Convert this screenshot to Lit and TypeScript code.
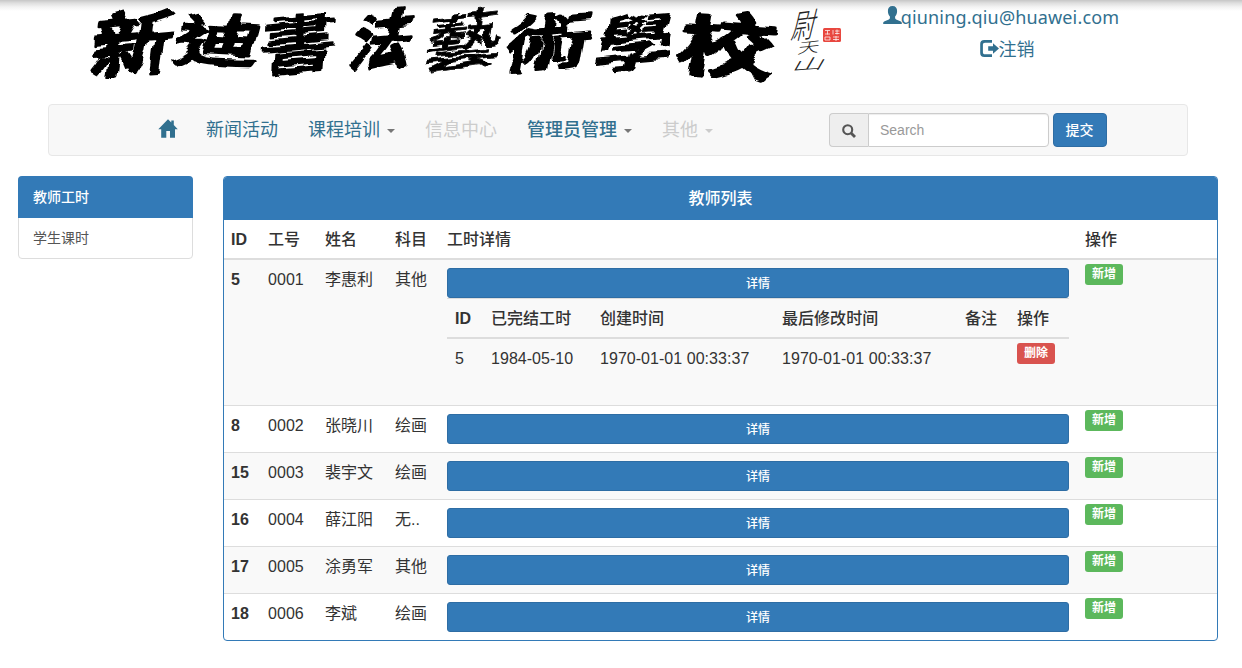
import { LitElement, html, css, svg, nothing } from "lit";
import { customElement } from "lit/decorators.js";

interface Detail { id: string; done: string; created: string; modified: string; note: string; }
interface Teacher { id: string; no: string; name: string; subject: string; details?: Detail[]; }

const TEACHERS: Teacher[] = [
  { id: "5", no: "0001", name: "李惠利", subject: "其他",
    details: [{ id: "5", done: "1984-05-10", created: "1970-01-01 00:33:37", modified: "1970-01-01 00:33:37", note: "" }] },
  { id: "8", no: "0002", name: "张晓川", subject: "绘画" },
  { id: "15", no: "0003", name: "裴宇文", subject: "绘画" },
  { id: "16", no: "0004", name: "薛江阳", subject: "无.." },
  { id: "17", no: "0005", name: "涂勇军", subject: "其他" },
  { id: "18", no: "0006", name: "李斌", subject: "绘画" },
];

// char, centre x, centre y, x scale, y scale, skew, rotation, stroke weight
const BRUSH: [string, number, number, number, number, number, number, number][] = [
  ["新", 133, 44, 0.82, 0.68, -12, -5, 4.5],
  ["迪", 219, 41, 0.84, 0.54, -12, 3, 5],
  ["書", 299, 43, 0.76, 0.68, -8, -5, 2.5],
  ["法", 383, 40, 0.62, 0.6, -18, -5, 6],
  ["藝", 463, 41, 0.76, 0.63, -14, -6, 1.2],
  ["術", 548, 43, 0.86, 0.64, -14, -4, 4],
  ["學", 634, 44, 0.78, 0.64, -16, -5, 2.2],
  ["校", 727, 46, 0.98, 0.68, -6, 4, 5],
];

@customElement("school-logo")
export class SchoolLogo extends LitElement {
  static styles = css`
    :host { display: block; }
    svg { display: block; overflow: visible; }
    text { font-family: "Noto Sans CJK TC", "Noto Sans CJK SC", sans-serif; text-anchor: middle; }
    .brush { font-size: 100px; font-weight: 500; fill: #060606; stroke: #060606; stroke-linejoin: round; }
    .sign { font-size: 24px; font-weight: 300; fill: #222; }
    .seal { fill: #e8473f; }
    .seal-lines { stroke: #fff; stroke-width: .9; fill: none; opacity: .8; }
    .scrap { stroke: #999; stroke-width: 1; stroke-dasharray: 4 2 2 3 7 2 5 3; }
  `;
  render() {
    return html`<svg width="860" height="104" viewBox="0 0 860 104" role="img" aria-label="新迪書法藝術學校">
      <defs>
        <filter id="rough" filterUnits="userSpaceOnUse" x="80" y="0" width="710" height="90">
          <feTurbulence type="fractalNoise" baseFrequency="0.035 0.05" numOctaves="2" seed="8" result="n"></feTurbulence>
          <feDisplacementMap in="SourceGraphic" in2="n" scale="13" xChannelSelector="R" yChannelSelector="G"></feDisplacementMap>
        </filter>
      </defs>
      <g filter="url(#rough)">
        ${BRUSH.map(([c, x, y, sx, sy, k, r, w]) => svg`<text class="brush" stroke-width=${w}
          transform="translate(${x} ${y}) rotate(${r}) skewX(${k}) scale(${sx} ${sy})" x="0" y="37">${c}</text>`)}
      </g>
      <g>
        <text class="sign" transform="translate(805 25) rotate(-8) skewX(-22) scale(1 1.35)" x="0" y="9">尉</text>
        <text class="sign" transform="translate(809 47) rotate(-6) skewX(-18) scale(.9 .6)" x="0" y="9">天</text>
        <text class="sign" transform="translate(810 64) rotate(-4) skewX(-34) scale(1.35 .6)" x="0" y="9">山</text>
      </g>
      <rect class="seal" x="823" y="28" width="18" height="14" rx="1.5"></rect>
      <path class="seal-lines" d="M825 30.500h5M827.500 30.500v4M825 34h5M833 30v4.500M835 31h4.500M835 33.500h4.500M837 29.500v5M825 37h5v3h-5zM833 37h6M833 39.500h6M836 36v5"></path>
    </svg>`;
  }
}

const userIcon = html`<svg width="19" height="18" viewBox="0 0 19 18" fill="currentColor"><path d="M9.5 0C12.600 0 14.200 2 14.100 5c0 2.500-.8 4.300-2 5.500v1.600c0 .7.400 1 1 1.300l4.300 1.900c1 .5 1.400 1 1.400 1.900v.8H.2v-.8c0-.9.400-1.400 1.400-1.900l4.300-1.900c.6-.3 1-.6 1-1.300v-1.600c-1.200-1.200-2-3-2-5.500C4.800 2 6.400 0 9.500 0z"/></svg>`;
const logoutIcon = html`<svg width="19" height="17" viewBox="0 0 19 17" fill="currentColor"><path d="M12 0v2.700H5C3.600 2.700 2.900 3.400 2.900 4.800v7.400c0 1.400.7 2.100 2.100 2.100h7V17H4.300C1.500 17 .2 15.500.2 12.900V4.100C.2 1.500 1.500 0 4.300 0z"/><path d="M13 3.200 19 8.500l-6 5.300V10.700H8.200V6.300H13z"/></svg>`;
const homeIcon = html`<svg width="20" height="19" viewBox="0 0 20 19" fill="currentColor"><path d="M10 .2 13.300 3.500V1.600h2.500V6L19.800 10.200H17V18.700H12V12H8.300v6.700H3.200V10.200H.3z"/></svg>`;
const searchIcon = html`<svg width="14" height="14" viewBox="0 0 14 14" fill="none" stroke="currentColor"><circle cx="5.700" cy="5.700" r="4.500" stroke-width="2.100"/><path d="M9 9l4 4" stroke-width="2.800"/></svg>`;

@customElement("app-root")
export class AppRoot extends LitElement {
  static styles = css`
    :host { display: block; width: 1242px; height: 668px; overflow: hidden; background: #fff; color: #333;
      font-family: "Liberation Sans", "Noto Sans CJK SC", sans-serif; font-size: 16px; line-height: 23px; }
    * { box-sizing: border-box; }
    svg { display: block; flex: none; }
    .header { height: 104px; display: flex; background: linear-gradient(#c6c6c6 0, #dedede 3px, #f3f3f3 7px, #fff 11px); }
    .user { width: 282px; display: flex; flex-direction: column; align-items: center; color: #31708f;
      font-family: "Noto Sans", "Noto Sans CJK SC", sans-serif; font-size: 18px; padding-top: 4px; }
    .user-line { display: flex; height: 26px; line-height: 26px; }
    .email { letter-spacing: .15px; white-space: nowrap; margin-left: -1px; }
    .user-line + .user-line { margin-top: 6px; padding-left: 12px; }
    .user-line svg { margin-top: 2px; }
    .user-line + .user-line svg { margin-top: 4px; }
    .nav { margin: 0 54px 0 48px; height: 52px; border: 1px solid #e7e7e7; border-radius: 4px; background: #f8f8f8;
      display: flex; align-items: center; font-size: 18px; color: #31708f; padding-left: 109px; }
    .menu { display: flex; align-items: center; gap: 30px; width: 671px; line-height: 26px; }
    .menu svg { margin: -3px -2px 0 0; }
    .item { display: flex; align-items: center; white-space: nowrap; }
    .item.mid { font-weight: 500; }
    .item.off { color: #ccc; }
    .caret { border: 4px solid transparent; border-top-color: #777; border-bottom: 0; margin: 2px 0 0 7px; }
    .off .caret { border-top-color: #ccc; }
    .search { display: flex; height: 34px; font-size: 14px; }
    .addon { width: 39px; border: 1px solid #ccc; border-right: 0; border-radius: 4px 0 0 4px; background: #eee; color: #555;
      display: flex; align-items: center; justify-content: center; padding: 2px 1px 0 0; }
    .field { width: 181px; border: 1px solid #ccc; border-radius: 0 4px 4px 0; background: #fff; font: inherit; padding: 0 11px;
      box-shadow: inset 0 1px 1px rgba(0,0,0,.075); outline: none; }
    .field::placeholder { color: #999; }
    .submit { margin-left: 4px; width: 54px; border: 1px solid #2e6da4; border-radius: 4px; background: #337ab7; color: #fff;
      font: 500 14px "Noto Sans CJK SC", sans-serif; padding: 0 1px 2px 0; }
    .main { display: flex; align-items: flex-start; padding: 20px 24px 0 18px; gap: 30px; }
    .side { width: 175px; font-size: 14px; flex: none; border: 1px solid #ddd; border-radius: 4px; color: #555; }
    .side-item { height: 40px; line-height: 40px; padding-left: 14px; }
    .side-item.active { background: #337ab7; color: #fff; font-weight: 500; border-radius: 4px 4px 0 0; margin: -1px -1px 0; padding-left: 15px; height: 42px; line-height: 42px; }
    .panel { width: 995px; border: 1px solid #337ab7; border-radius: 4px; overflow: hidden; }
    .title { background: #337ab7; color: #fff; height: 43px; line-height: 43px; text-align: center; font-weight: 500; }
    .row { display: grid; grid-template-columns: 36px 57px 70px 52px 638px 1fr; border-top: 1px solid #ddd; }
    .row:nth-child(even) { background: #f9f9f9; }
    .row.head { background: #fff; border-top: 0; border-bottom: 2px solid #ddd; height: 40px; font-weight: 500; }
    .row.first { border-top: 0; }
    .cell { padding: 8px; white-space: nowrap; letter-spacing: .04px; }
    .cell:first-child { padding-left: 7px; font-weight: 700; }
    .cell.ops { padding-top: 4px; }
    .row.head .cell.ops { padding-top: 8px; }
    .detail { display: block; width: 622px; height: 30px; border: 1px solid #2e6da4; border-radius: 3px; background: #337ab7; color: #fff;
      font: 500 12px "Noto Sans CJK SC", sans-serif; padding: 0 0 2px; }
    .tag { display: block; width: 38px; height: 21px; line-height: 21px; border-radius: 3px; background: #5cb85c; color: #fff;
      font-size: 12px; font-weight: 700; text-align: center; }
    .tag.red { background: #d9534f; }
    .inner { margin-bottom: 19px; }
    .irow { display: grid; grid-template-columns: 36px 109px 182px 183px 52px 1fr; height: 39px; }
    .irow.ihead { height: 41px; border-top: 1px solid #ddd; border-bottom: 2px solid #ddd; font-weight: 500; }
    .irow .cell:first-child { padding-left: 8px; font-weight: 400; }
    .irow.ihead .cell:first-child { font-weight: 700; }
    .irow.ihead .cell.ops { padding-top: 8px; }
  `;

  private row(t: Teacher, i: number) {
    return html`<div class="row ${i === 0 ? "first" : ""}">
      <div class="cell">${t.id}</div><div class="cell">${t.no}</div><div class="cell">${t.name}</div><div class="cell">${t.subject}</div>
      <div class="cell"><button class="detail">详情</button>
        ${t.details ? html`<div class="inner">
          <div class="irow ihead">
            <div class="cell">ID</div><div class="cell">已完结工时</div><div class="cell">创建时间</div>
            <div class="cell">最后修改时间</div><div class="cell">备注</div><div class="cell ops">操作</div>
          </div>
          ${t.details.map((d) => html`<div class="irow">
            <div class="cell">${d.id}</div><div class="cell">${d.done}</div><div class="cell">${d.created}</div>
            <div class="cell">${d.modified}</div><div class="cell">${d.note}</div><div class="cell ops"><span class="tag red">删除</span></div>
          </div>`)}
        </div>` : nothing}
      </div>
      <div class="cell ops"><span class="tag">新增</span></div>
    </div>`;
  }

  render() {
    return html`
      <div class="header">
        <school-logo></school-logo>
        <div class="user">
          <div class="user-line">${userIcon}<span class="email">qiuning.qiu@huawei.com</span></div>
          <div class="user-line">${logoutIcon}<span>注销</span></div>
        </div>
      </div>
      <div class="nav">
        <div class="menu">
          ${homeIcon}
          <span class="item">新闻活动</span>
          <span class="item">课程培训<i class="caret"></i></span>
          <span class="item off">信息中心</span>
          <span class="item mid">管理员管理<i class="caret"></i></span>
          <span class="item off">其他<i class="caret"></i></span>
        </div>
        <div class="search">
          <span class="addon">${searchIcon}</span><input class="field" placeholder="Search" /><button class="submit">提交</button>
        </div>
      </div>
      <div class="main">
        <div class="side">
          <div class="side-item active">教师工时</div>
          <div class="side-item">学生课时</div>
        </div>
        <div class="panel">
          <div class="title">教师列表</div>
          <div class="table">
            <div class="row head">
              <div class="cell">ID</div><div class="cell">工号</div><div class="cell">姓名</div><div class="cell">科目</div>
              <div class="cell">工时详情</div><div class="cell ops">操作</div>
            </div>
            ${TEACHERS.map((t, i) => this.row(t, i))}
          </div>
        </div>
      </div>`;
  }
}
